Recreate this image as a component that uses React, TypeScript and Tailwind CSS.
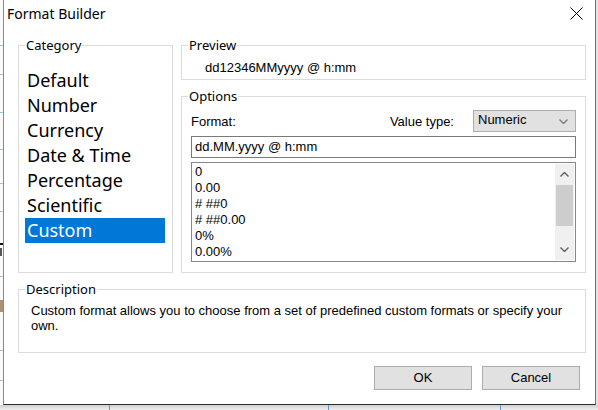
import type { ReactNode } from 'react'

const CATEGORIES = ['Default', 'Number', 'Currency', 'Date & Time', 'Percentage', 'Scientific', 'Custom']
const FORMATS = ['0', '0.00', '# ##0', '# ##0.00', '0%', '0.00%']

// grid lines of the sheet behind the dialog
const ROW_LINES = [45, 74, 112, 149, 183, 211, 276, 350, 380]

function GroupBox({ label, className, children }: { label: string; className?: string; children?: ReactNode }) {
  return (
    <div className={`relative border border-[#dcdcdc] ${className ?? ''}`}>
      <span className="absolute -top-[9px] left-[6px] bg-white px-[1px] font-['Noto_Sans',sans-serif] text-[13px] leading-[16px] text-black">
        {label}
      </span>
      {children}
    </div>
  )
}

function Chevron({ up, className }: { up?: boolean; className?: string }) {
  return (
    <svg width="9" height="5" viewBox="0 0 9 5" className={className}>
      <polyline
        points={up ? '0.5,4.5 4.5,0.5 8.5,4.5' : '0.5,0.5 4.5,4.5 8.5,0.5'}
        fill="none"
        stroke="currentColor"
        strokeWidth="1.4"
      />
    </svg>
  )
}

export default function App() {
  return (
    <div className="flex h-[410px] w-[598px] flex-col overflow-hidden bg-[#dedede]">
      <div className="flex h-[405px]">
        {/* sliver of the spreadsheet behind */}
        <svg width="3" height="405" className="shrink-0 bg-[#fafafa]">
          {ROW_LINES.map((y) => (
            <rect key={y} x="0" y={y} width="3" height="1" fill="#9cc3e0" />
          ))}
          <rect x="0" y="243" width="3" height="2" fill="#111" />
          <rect x="0" y="248" width="2" height="8" fill="#555" />
          <rect x="0" y="300" width="3" height="12" fill="#b09070" />
        </svg>

        <div className="flex w-[593px] flex-col border-b border-l border-r border-b-[#2b2b2b] border-l-[#8a8a8a] border-r-[#6e6e6e] bg-white font-['Liberation_Sans',Arial,sans-serif] text-[13px] text-black">
          {/* title bar */}
          <div className="flex h-[30px] shrink-0 items-center justify-between pb-[2px] pl-[3px] pr-[12px]">
            <span className="font-['Noto_Sans',sans-serif] text-[14px] leading-[20px]">Format Builder</span>
            <svg width="13" height="13" viewBox="0 0 13 13" className="mb-[2px]">
              <path d="M0.5 0.5 L12.5 12.5 M12.5 0.5 L0.5 12.5" stroke="#000" strokeWidth="1" fill="none" />
            </svg>
          </div>

          <div className="flex flex-col pl-[14px] pr-[9px] pt-[15px]">
            <div className="flex h-[228px] gap-[8px]">
              <GroupBox label="Category" className="w-[155px]">
                <ul className="flex flex-col pl-[6px] pt-[22px]">
                  {CATEGORIES.map((c) => (
                    <li
                      key={c}
                      className={`h-[25px] w-[140px] pl-[2px] font-['Noto_Sans',sans-serif] text-[18px] leading-[25px] ${
                        c === 'Custom' ? 'bg-[#0078d7] text-white' : 'text-black'
                      }`}
                    >
                      {c}
                    </li>
                  ))}
                </ul>
              </GroupBox>

              <div className="flex w-[405px] flex-col gap-[16px]">
                <GroupBox label="Preview" className="h-[35px]">
                  <div className="pl-[23px] pt-[14px] leading-[16px]">dd12346MMyyyy @ h:mm</div>
                </GroupBox>

                <GroupBox label="Options" className="h-[177px]">
                  <div className="flex flex-col px-[9px] pt-[13px]">
                    <div className="flex h-[22px] items-start">
                      <span className="mt-[4px] leading-[16px]">Format:</span>
                      <span className="ml-auto mt-[4px] leading-[16px]">Value type:</span>
                      <div className="ml-[19px] flex h-[22px] w-[103px] items-center justify-between border border-[#adadad] bg-[#e1e1e1] pl-[4px] pr-[7px] leading-[16px]">
                        <span className="-mt-[3px]">Numeric</span>
                        <Chevron className="text-[#7a7a7a]" />
                      </div>
                    </div>

                    <div className="mt-[4px] h-[22px] border border-[#7a7a7a] pl-[3px] leading-[20px]">
                      dd.MM.yyyy @ h:mm
                    </div>

                    <div className="mt-[4px] flex h-[100px] border border-[#828790]">
                      <ul className="flex-1 pl-[3px] pt-[1px] leading-[16px]">
                        {FORMATS.map((f) => (
                          <li key={f}>{f}</li>
                        ))}
                      </ul>
                      <div className="my-[1px] mr-[1px] flex w-[19px] flex-col bg-[#f0f0f0]">
                        <div className="flex h-[21px] items-center justify-center">
                          <Chevron up className="text-[#606060]" />
                        </div>
                        <div className="mx-[1px] h-[41px] bg-[#cdcdcd]" />
                        <div className="flex flex-1 items-end justify-center pb-[8px]">
                          <Chevron className="text-[#606060]" />
                        </div>
                      </div>
                    </div>
                  </div>
                </GroupBox>
              </div>
            </div>

            <GroupBox label="Description" className="mt-[16px] h-[64px]">
              <p className="pl-[12px] pr-[12px] pt-[13px] leading-[15px]">
                Custom format allows you to choose from a set of predefined custom formats or specify your own.
              </p>
            </GroupBox>

            <div className="mt-[13px] flex justify-end gap-[10px] pr-[6px]">
              <button className="h-[24px] w-[98px] border border-[#adadad] bg-[#e1e1e1] leading-[22px]">OK</button>
              <button className="h-[24px] w-[98px] border border-[#adadad] bg-[#e1e1e1] leading-[22px]">Cancel</button>
            </div>
          </div>
        </div>

        <div className="w-[2px] bg-[#e4e4e4]" />
      </div>

      {/* bottom edge of the sheet behind */}
      <div className="relative flex h-[5px] bg-gradient-to-b from-[#cfcfcf] to-[#efefef]">
        <div className="ml-[109px] w-[1px] bg-[#5b9bc4]" />
        <div className="ml-[218px] w-[1px] bg-[#5b9bc4]" />
        <div className="ml-[171px] w-[1px] bg-[#5b9bc4]" />
      </div>
    </div>
  )
}
